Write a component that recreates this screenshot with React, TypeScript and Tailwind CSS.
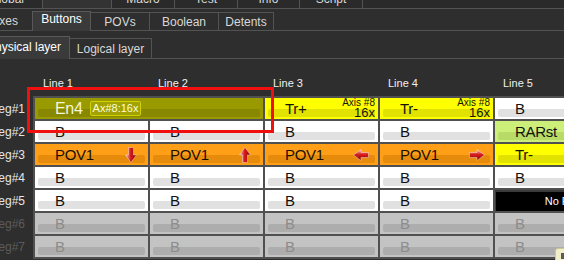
import React from "react";

type Kind = "white" | "dis" | "orange" | "yellow" | "olive" | "green" | "black";
type Arrow = "down" | "up" | "left" | "right";

interface CellData {
	kind: Kind;
	text: string;
	span?: boolean;
	badge?: string;
	axis?: boolean;
	arrow?: Arrow;
}

const styles: Record<Kind, { bg: string; bar: string; text: string }> = {
	white: { bg: "bg-white", bar: "bg-[#e1e1e1]", text: "text-[#111]" },
	dis: { bg: "bg-[#c3c3c3]", bar: "bg-[#adadad]", text: "text-[#8c8c8c]" },
	orange: { bg: "bg-[#ff9f17]", bar: "bg-[#e78b0d]", text: "text-[#1a1000]" },
	yellow: { bg: "bg-[#ffff00]", bar: "bg-[#e2e200]", text: "text-[#151500]" },
	olive: { bg: "bg-[#999900]", bar: "bg-[#878700]", text: "text-[#f6f6d6]" },
	green: { bg: "bg-[#ccef7a]", bar: "bg-[#b8da66]", text: "text-[#111]" },
	black: { bg: "bg-black", bar: "", text: "text-white" },
};

const B: CellData = { kind: "white", text: "B" };
const D: CellData = { kind: "dis", text: "B" };

const rows: CellData[][] = [
	[
		{ kind: "olive", text: "En4", span: true, badge: "Ax#8:16x" },
		{ kind: "yellow", text: "Tr+", axis: true },
		{ kind: "yellow", text: "Tr-", axis: true },
		B,
	],
	[B, B, B, B, { kind: "green", text: "RARst" }],
	[
		{ kind: "orange", text: "POV1", arrow: "down" },
		{ kind: "orange", text: "POV1", arrow: "up" },
		{ kind: "orange", text: "POV1", arrow: "left" },
		{ kind: "orange", text: "POV1", arrow: "right" },
		{ kind: "yellow", text: "Tr-" },
	],
	[B, B, B, B, B],
	[B, B, B, B, { kind: "black", text: "No Function" }],
	[D, D, D, D, D],
	[D, D, D, D, D],
];

const labels = ["Seg#1", "Seg#2", "Seg#3", "Seg#4", "Seg#5", "Seg#6", "Seg#7"];

// red arrow used in the POV cells
function PovArrow({ dir }: { dir: Arrow }) {
	const id = `g-${dir}`;
	const vertical = dir === "down" || dir === "up";
	const w = vertical ? 12 : 16;
	const h = vertical ? 16 : 12;
	let d = "";
	if (dir === "down") d = "M3.5 0.5H8.5V8H11.5L6 15.5L0.5 8H3.5Z";
	if (dir === "up") d = "M3.5 15.5H8.5V8H11.5L6 0.5L0.5 8H3.5Z";
	if (dir === "left") d = "M15.5 3.5V8.5H8V11.5L0.5 6L8 0.5V3.5Z";
	if (dir === "right") d = "M0.5 3.5V8.5H8V11.5L15.5 6L8 0.5V3.5Z";
	const mr = { down: "mr-[11px]", up: "mr-[12px]", left: "mr-[9px]", right: "mr-[8px]" }[dir];
	return (
		<svg width={w} height={h} viewBox={`0 0 ${w} ${h}`} className={`relative ml-auto ${mr}`}>
			<defs>
				<linearGradient id={id} x1="0" y1="0" x2={vertical ? "1" : "0"} y2={vertical ? "0" : "1"}>
					<stop offset="0" stopColor="#f2c4c4" />
					<stop offset="0.45" stopColor="#d81e1e" />
					<stop offset="1" stopColor="#870000" />
				</linearGradient>
			</defs>
			<path d={d} fill={`url(#${id})`} stroke="#f3e0e0" strokeOpacity="0.6" strokeWidth="0.8" />
		</svg>
	);
}

function Cell({ c }: { c: CellData }) {
	const s = styles[c.kind];
	const black = c.kind === "black";
	return (
		<div
			className={`relative flex items-center overflow-hidden ${s.bg} ${c.span ? "col-span-2" : ""} ${
				black ? "border-t-2 border-l border-[#3a3a3a]" : ""
			}`}
		>
			{s.bar && <div className={`absolute left-[3px] right-[3px] top-[11px] bottom-[2px] rounded-[2px] ${s.bar}`} />}
			{black ? (
				<span className="relative ml-auto mr-[4px] text-[11px] whitespace-nowrap text-white">{c.text}</span>
			) : (
				<span
					className={`relative pl-[20px] leading-none tracking-[-0.3px] ${c.span ? "text-[16px]" : "text-[15px]"} ${s.text}`}
				>
					{c.text}
				</span>
			)}
			{c.badge && (
				<span className="relative ml-[7px] h-[15px] px-[2px] flex items-center border border-[#d2d200] bg-[#a2a206] rounded-[2px] text-[11px] text-[#ffffcf]">
					{c.badge}
				</span>
			)}
			{c.axis && (
				<div className="relative ml-auto mr-[3px] self-stretch flex flex-col items-end text-[#151500]">
					<span className="mt-[1px] text-[10px] leading-[8px]">Axis #8</span>
					<span className="text-[13px] leading-[12px]">16x</span>
				</div>
			)}
			{c.arrow && <PovArrow dir={c.arrow} />}
		</div>
	);
}

export default function App() {
	return (
		<div className="relative w-[564px] h-[260px] overflow-hidden bg-[#2e2e2e] text-[12px] text-[#d8d8d8] font-['Liberation_Sans',Arial,sans-serif]">
			{/* top tab strip, mostly scrolled out of view */}
			<div className="flex h-[9px] overflow-hidden border-b border-[#535353] bg-[#2a2a2a]">
				<div className="w-[43px] shrink-0 flex justify-end pr-[18px] border-r border-[#535353]">
					<span className="-mt-[7px] leading-[12px] whitespace-nowrap">Global</span>
				</div>
				<div className="w-[69px] shrink-0 bg-[#333] border-r border-[#535353]" />
				{["Macro", "Test", "Info", "Script"].map((t, i) => (
					<div
						key={t}
						className={`${i === 2 ? "w-[62px]" : "w-[63px]"} shrink-0 flex justify-center border-r border-[#535353]`}
					>
						<span className="-mt-[7px] leading-[12px]">{t}</span>
					</div>
				))}
			</div>

			{/* second tab row */}
			<div className="flex items-end h-[22px] border-b border-[#535353]">
				<div className="w-[32px] h-[18px] shrink-0 flex items-center justify-end pr-[14px] overflow-visible">
					<span className="whitespace-nowrap">Axes</span>
				</div>
				<div className="relative w-[59px] h-[20px] -mb-px shrink-0 flex items-center justify-center pb-[5px] bg-[#3a3a3a] border-x border-t border-[#585858] text-white">
					Buttons
				</div>
				<div className="w-[59px] h-[18px] shrink-0 flex items-center justify-center border-t border-r border-[#535353]">
					POVs
				</div>
				<div className="w-[69px] h-[18px] shrink-0 flex items-center justify-center border-t border-r border-[#535353]">
					Boolean
				</div>
				<div className="w-[55px] h-[18px] shrink-0 flex items-center justify-center border-t border-r border-[#535353]">
					Detents
				</div>
			</div>

			{/* layer tabs */}
			<div className="flex items-end h-[28px] border-b border-[#535353]">
				<div className="relative w-[70px] h-[23px] -mb-px shrink-0 flex items-center justify-end pr-[8px] pb-[3px] bg-[#3a3a3a] border-t border-r border-[#585858] text-white">
					<span className="whitespace-nowrap shrink-0">Physical layer</span>
				</div>
				<div className="w-[82px] h-[20px] shrink-0 flex items-center justify-center border-t border-r border-[#535353]">
					Logical layer
				</div>
			</div>

			{/* column headers */}
			<div className="flex h-[37px] pt-[18px] pl-[35px] text-[11px] leading-[13px] text-[#f0f0f0]">
				{[1, 2, 3, 4, 5].map((n) => (
					<div key={n} className="w-[115px] shrink-0 pl-[8px]">
						Line {n}
					</div>
				))}
			</div>

			{/* button grid */}
			<div className="flex">
				<div className="w-[33px] shrink-0 flex flex-col gap-[2px] pt-[2px] overflow-hidden">
					{labels.map((l, i) => (
						<div
							key={l}
							className={`h-[21px] flex items-center justify-end pr-[8px] ${
								i > 4 ? "text-[#5c5c5c]" : "text-[#e6e6e6]"
							}`}
						>
							<span className="whitespace-nowrap shrink-0">{l}</span>
						</div>
					))}
				</div>
				<div className="shrink-0 grid grid-cols-[repeat(5,113px)] auto-rows-[21px] gap-[2px] p-[2px] bg-[#505050]">
					{rows.map((r, ri) => r.map((c, ci) => <Cell key={`${ri}-${ci}`} c={c} />))}
				</div>
			</div>

			{/* red highlight annotation */}
			<div className="absolute left-[27px] top-[87px] w-[247px] h-[46px] border-[3px] border-[#f01010]" />

			{/* grip peeking in bottom right */}
			<div className="absolute left-[555px] top-[248px] w-[12px] h-[14px] rounded-tl-[3px] bg-[#f1efc8] border border-[#cbc69c]">
				<div className="ml-[5px] mt-[4px] w-[4px] h-[6px] bg-[#5a5a5a]" />
			</div>
		</div>
	);
}
